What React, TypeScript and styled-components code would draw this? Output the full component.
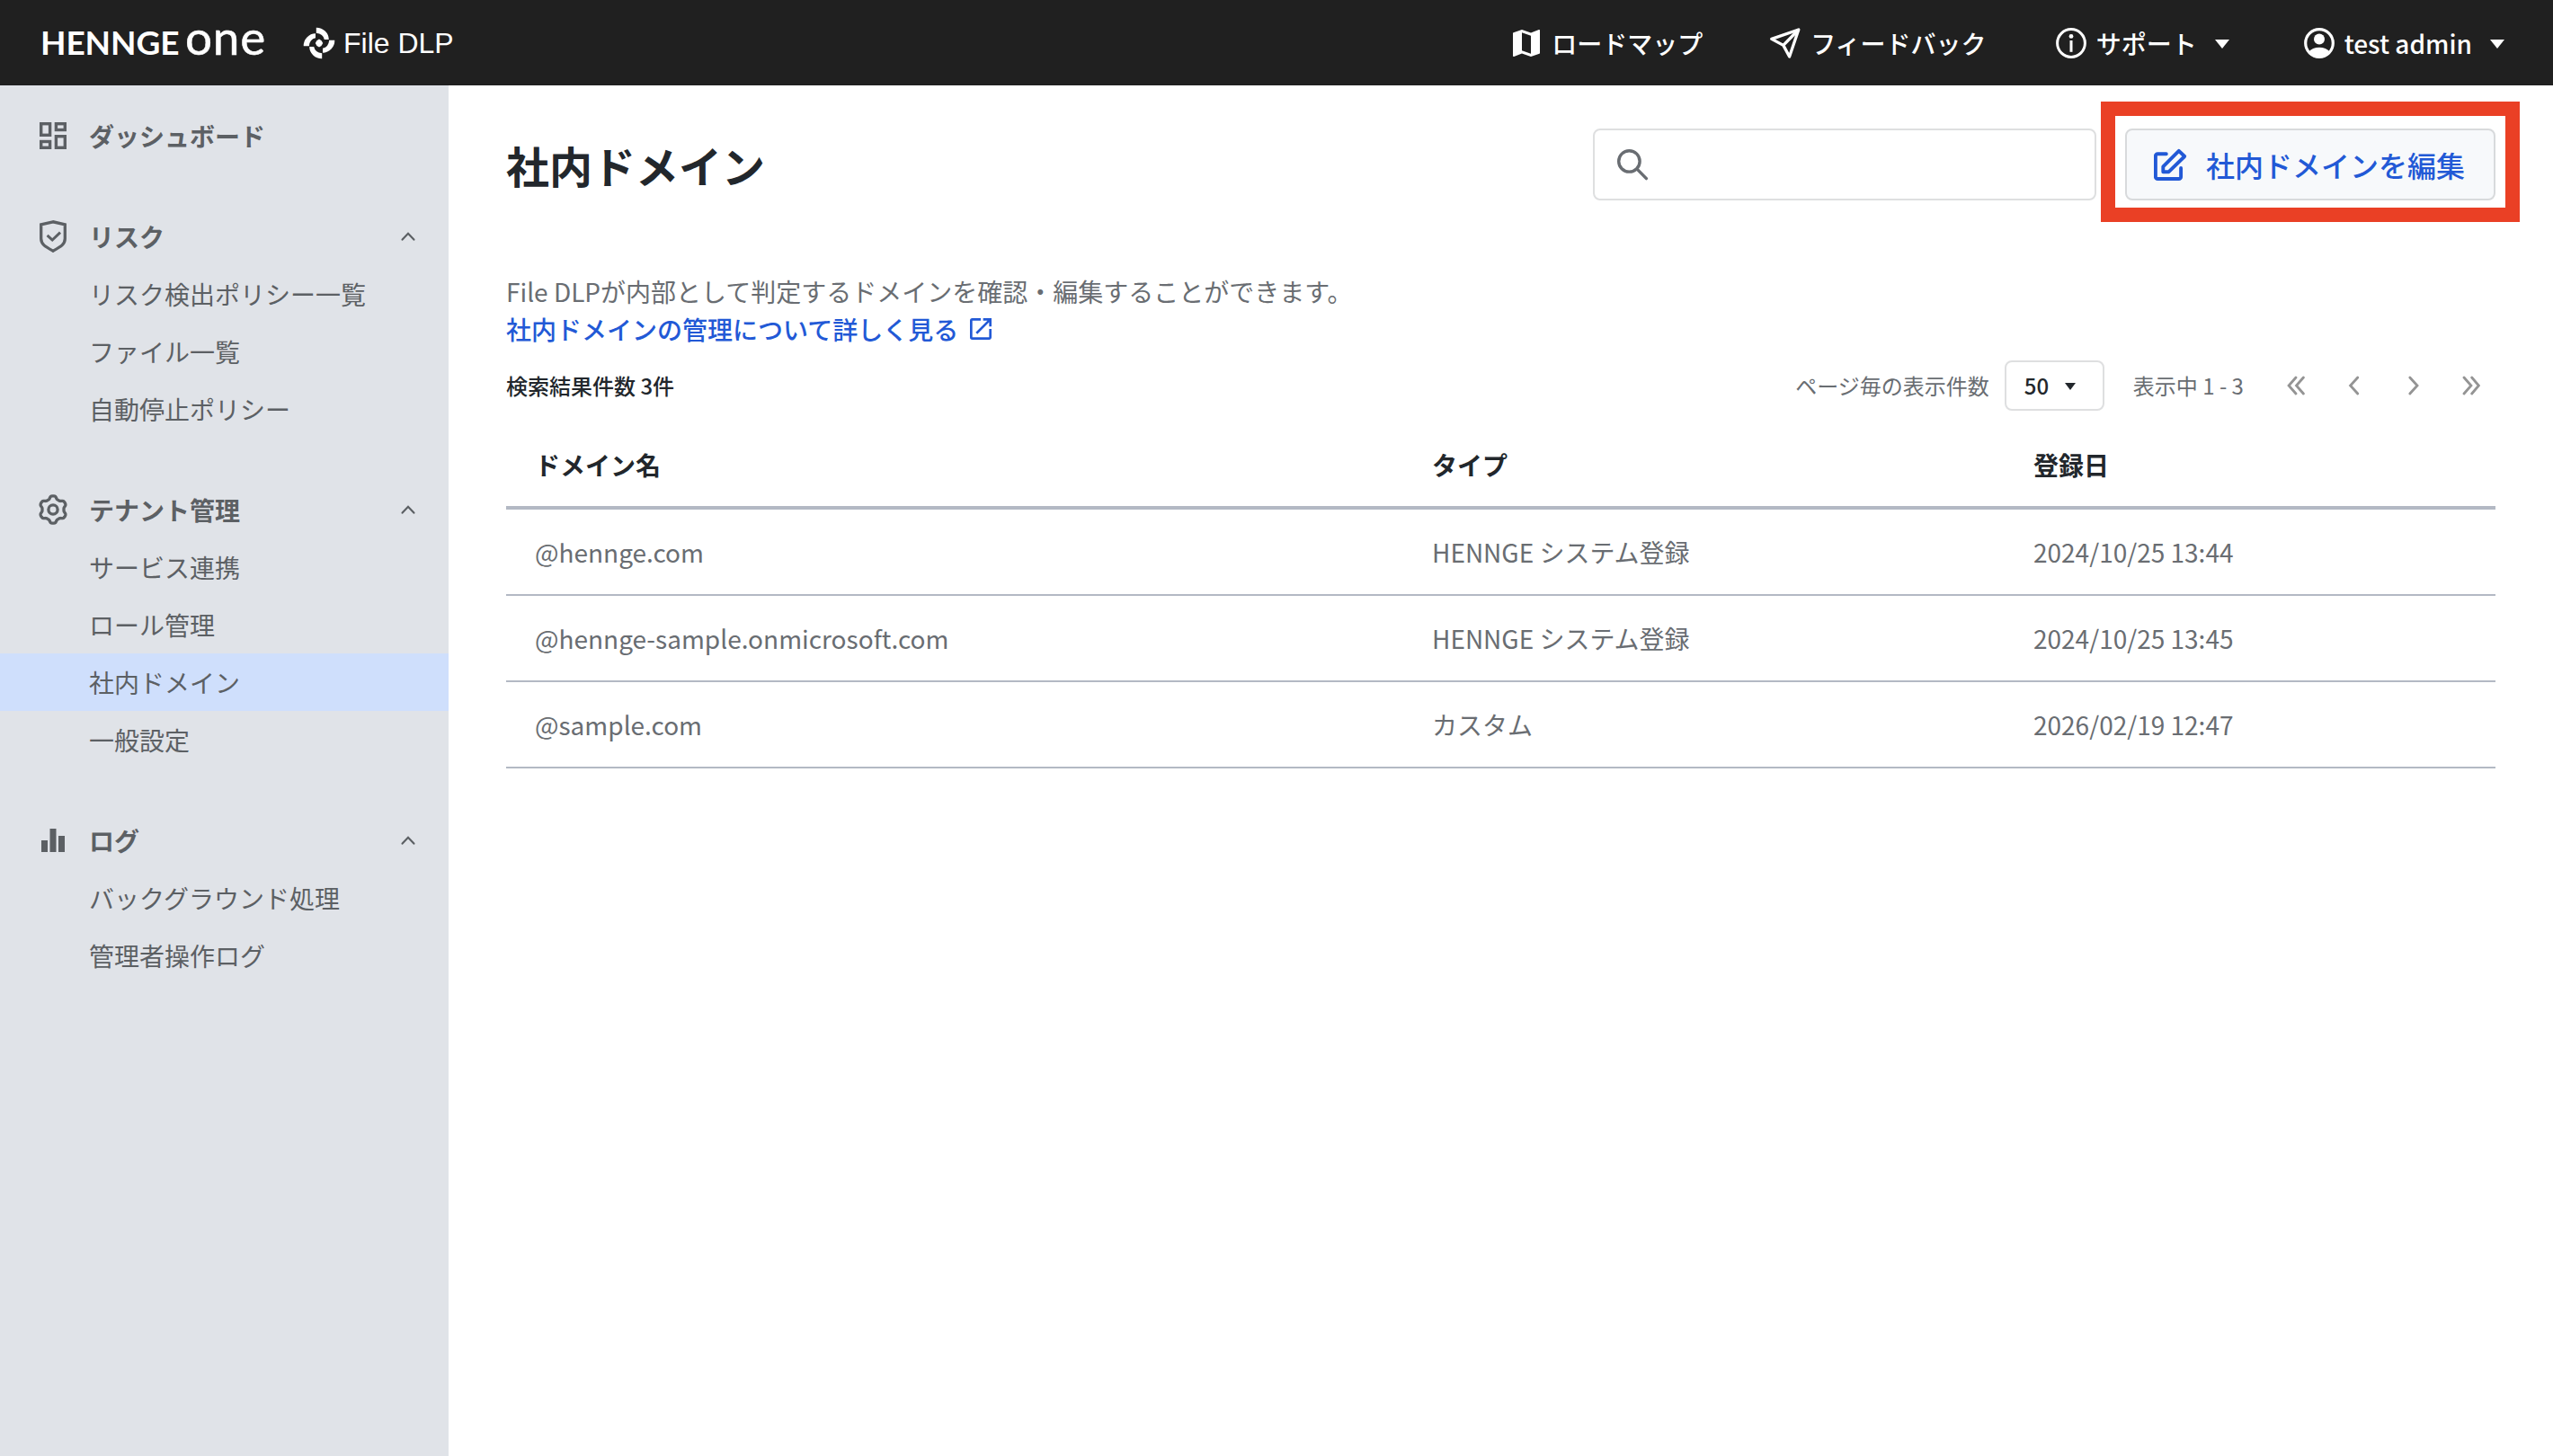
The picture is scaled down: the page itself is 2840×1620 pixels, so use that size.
import React from 'react';
import styled, { createGlobalStyle } from 'styled-components';
import { MdMap, MdOpenInNew } from 'react-icons/md';

const color = {
  header: '#202020',
  sidebar: '#e0e3e8',
  active: '#cfdffc',
  nav: '#5c6064',
  text: '#696d72',
  dark: '#22272c',
  blue: '#2259d6',
  line: '#b3b9c4',
  border: '#dedfe0',
  red: '#ea4025',
};

const GlobalStyle = createGlobalStyle`
  *, *::before, *::after { box-sizing: border-box; }
  html, body { margin: 0; background: #fff; }
  body {
    font-family: "Noto Sans CJK JP", "Noto Sans", sans-serif;
    font-size: 28px;
    line-height: 42px;
    color: ${color.text};
  }
  svg { display: block; flex: none; }
`;

const Page = styled.div`
  display: flex;
  flex-direction: column;
  width: 2840px;
  height: 1620px;
  overflow: hidden;
`;

/* ---------- header ---------- */

const Header = styled.header`
  display: flex;
  align-items: center;
  justify-content: space-between;
  height: 95px;
  flex: none;
  padding: 0 54px 0 45px;
  background: ${color.header};
  color: #fff;
  font-weight: 500;
`;

const Brand = styled.div`
  display: flex;
  align-items: center;
`;

const Wordmark = styled.div`
  display: flex;
  align-items: baseline;
  width: 292px;
  height: 95px;
  line-height: 81px;
  font-family: Lato, "Open Sans", sans-serif;
  white-space: nowrap;
`;

const WordmarkName = styled.span`
  width: 161px;
  font-size: 37px;
  font-weight: 700;
  letter-spacing: -0.1px;
`;

const WordmarkOne = styled.span`
  font-size: 53px;
  font-weight: 400;
  letter-spacing: 0.8px;
  -webkit-text-stroke: 0.5px #fff;
`;

const Product = styled.div`
  display: flex;
  align-items: center;
  gap: 9px;
  font-family: "Liberation Sans", Arial, sans-serif;
  font-size: 32px;
  font-weight: 400;
`;

const HeaderNav = styled.nav`
  display: flex;
  align-items: center;
`;

const HeaderItem = styled.a<{ $gap: number; $after?: number }>`
  display: flex;
  align-items: center;
  gap: ${(p) => p.$gap}px;
  margin-right: ${(p) => p.$after ?? 0}px;
  white-space: nowrap;
`;

const Caret = styled.span<{ $w: number; $h: number; $left: number }>`
  width: 0;
  height: 0;
  margin-left: ${(p) => p.$left}px;
  margin-top: 2px;
  border-left: ${(p) => p.$w / 2}px solid transparent;
  border-right: ${(p) => p.$w / 2}px solid transparent;
  border-top: ${(p) => p.$h}px solid currentColor;
`;

/* ---------- sidebar ---------- */

const Body = styled.div`
  display: flex;
  flex: 1;
  min-height: 0;
`;

const Sidebar = styled.aside`
  display: flex;
  flex-direction: column;
  gap: 48px;
  width: 499px;
  flex: none;
  padding-top: 24px;
  background: ${color.sidebar};
  color: ${color.nav};
`;

const Group = styled.section`
  display: flex;
  flex-direction: column;
`;

const GroupHead = styled.div`
  display: flex;
  align-items: center;
  height: 64px;
  padding: 0 37px 0 39px;
  font-weight: 700;
`;

const GroupIcon = styled.span`
  display: flex;
  align-items: center;
  justify-content: center;
  width: 40px;
  height: 40px;
  margin-right: 20px;
`;

const GroupTitle = styled.span`
  flex: 1;
`;

const NavItem = styled.a<{ $active?: boolean }>`
  height: 64px;
  padding-left: 99px;
  line-height: 64px;
  background: ${(p) => (p.$active ? color.active : 'transparent')};
`;

/* ---------- main ---------- */

const Main = styled.main`
  flex: 1;
  padding: 48px 64px 0;
`;

const TitleRow = styled.div`
  display: flex;
  align-items: center;
  height: 80px;
`;

const Title = styled.h1`
  flex: 1;
  margin: 0;
  font-size: 48px;
  line-height: 72px;
  font-weight: 700;
  color: ${color.dark};
`;

const SearchBox = styled.div`
  display: flex;
  align-items: center;
  width: 560px;
  height: 80px;
  padding-left: 25px;
  border: 2px solid ${color.border};
  border-radius: 8px;
`;

const ButtonFrame = styled.div`
  position: relative;
  margin-left: 32px;
`;

const Highlight = styled.div`
  position: absolute;
  inset: -30px -27px -24px -27px;
  border: 16px solid ${color.red};
  pointer-events: none;
`;

const EditButton = styled.button`
  display: flex;
  align-items: center;
  gap: 21px;
  width: 412px;
  height: 80px;
  padding: 0 0 0 30px;
  border: 2px solid #d8dadc;
  border-radius: 8px;
  background: #f7f9fb;
  color: ${color.blue};
  font: inherit;
  font-size: 32px;
  font-weight: 500;
  white-space: nowrap;
`;

const Description = styled.p`
  margin: 80px 0 0;
`;

const DocLink = styled.a`
  display: flex;
  align-items: center;
  gap: 9px;
  height: 42px;
  color: ${color.blue};
  font-weight: 500;
`;

const Toolbar = styled.div`
  display: flex;
  align-items: center;
  height: 56px;
  margin-top: 14px;
  font-size: 24px;
`;

const ResultCount = styled.span`
  flex: 1;
  font-weight: 500;
  color: ${color.dark};
`;

const PageSize = styled.div`
  display: flex;
  align-items: center;
  width: 111px;
  height: 56px;
  margin: 0 32px 0 17px;
  padding-left: 20px;
  border: 2px solid ${color.border};
  border-radius: 8px;
  color: ${color.dark};
  font-weight: 500;
`;

const Range = styled.span`
  width: 149px;
`;

const Pager = styled.div`
  display: grid;
  grid-template-columns: repeat(4, 64.8px);
  justify-items: center;
  margin-right: -5px;
`;

const Table = styled.div`
  margin-top: 14px;
`;

const Row = styled.div<{ $head?: boolean }>`
  display: grid;
  grid-template-columns: 998px 669px 1fr;
  align-items: center;
  height: 96px;
  border-bottom: ${(p) => (p.$head ? 4 : 2)}px solid ${color.line};
  font-weight: ${(p) => (p.$head ? 700 : 400)};
  color: ${(p) => (p.$head ? color.dark : color.text)};
`;

const Cell = styled.div`
  padding-left: 32px;
`;

/* ---------- icons ---------- */

const DlpLogo = () => (
  <svg width="36" height="36" viewBox="-18 -18 36 36" fill="#fff">
    {[0, 90, 180, 270].map((a) => (
      <path
        key={a}
        transform={`rotate(${a})`}
        d="M-17.3 3.2A13.5 13.8 0 0 1 -4 -10.8V-5.8Q-10.5 -4.5 -11.2 3.2Z"
      />
    ))}
    <path d="M0 -4.4Q3.2 -3.2 4.2 0Q3.2 3.2 0 4.4Q-3.2 3.2 -4.2 0Q-3.2 -3.2 0 -4.4Z" />
  </svg>
);

const SendIcon = () => (
  <svg width="34" height="34" viewBox="0 0 34 34" fill="none" stroke="#fff" strokeWidth="3.3" strokeLinejoin="round">
    <path d="M1.8 12.4L31.8 2L21.6 32L14.8 19.4Z" />
    <path d="M14.8 19.4L31.8 2" />
  </svg>
);

const InfoIcon = () => (
  <svg width="34" height="34" viewBox="0 0 34 34" fill="none">
    <circle cx="17" cy="17" r="15.4" stroke="#fff" strokeWidth="3" />
    <circle cx="17" cy="9.4" r="2.4" fill="#fff" />
    <path d="M17 14V26.8" stroke="#fff" strokeWidth="3" />
  </svg>
);

const AccountIcon = () => (
  <svg width="34" height="34" viewBox="0 0 34 34" fill="#fff">
    <circle cx="17" cy="17" r="15.3" fill="none" stroke="#fff" strokeWidth="3.2" />
    <circle cx="17" cy="12.6" r="6" />
    <path d="M4.6 27.2C8 23.6 12 21.8 17 21.8C22 21.8 26 23.6 29.4 27.2A16 16 0 0 1 4.6 27.2Z" />
  </svg>
);

const DashboardIcon = () => (
  <svg width="30" height="30" viewBox="0 0 30 30" fill="none" stroke="currentColor" strokeWidth="3.4">
    <rect x="1.7" y="1.7" width="9.9" height="12.6" />
    <rect x="18.4" y="1.7" width="9.9" height="6.8" />
    <rect x="1.7" y="21.5" width="9.9" height="6.8" />
    <rect x="18.4" y="15.7" width="9.9" height="12.6" />
  </svg>
);

const ShieldIcon = () => (
  <svg width="30" height="36" viewBox="0 0 30 36" fill="none" stroke="currentColor">
    <path d="M15 1.8L1.7 4.9V20.5C1.7 27 6.5 29.5 15 34.2C23.5 29.5 28.3 27 28.3 20.5V4.9Z" strokeWidth="3.3" />
    <path d="M8.6 16.8L14.2 22L23 13.6" strokeWidth="3" />
  </svg>
);

const gearPath = (() => {
  const points: string[] = [];
  for (let i = 0; i < 180; i += 1) {
    const t = (i / 180) * Math.PI * 2;
    const r = 13.6 + (1.6 * Math.tanh(1.6 * Math.cos(6 * t))) / Math.tanh(1.6);
    points.push(`${(r * Math.sin(t)).toFixed(2)} ${(-r * Math.cos(t)).toFixed(2)}`);
  }
  return `M${points.join('L')}Z`;
})();

const GearIcon = () => (
  <svg width="36" height="36" viewBox="-18 -18 36 36" fill="none" stroke="currentColor" strokeWidth="3.3" strokeLinejoin="round">
    <path d={gearPath} />
    <circle r="5.1" />
  </svg>
);

const BarsIcon = () => (
  <svg width="26" height="26" viewBox="0 0 26 26" fill="currentColor">
    <rect x="0" y="13" width="7" height="13" />
    <rect x="9.5" y="0" width="7" height="26" />
    <rect x="19" y="8" width="7" height="18" />
  </svg>
);

const ChevronUp = () => (
  <svg width="16" height="10" viewBox="0 0 16 10" fill="none" stroke="currentColor" strokeWidth="2.2" strokeLinecap="round">
    <path d="M1.6 8.6L8 1.8L14.4 8.6" />
  </svg>
);

const SearchIcon = () => (
  <svg width="35" height="35" viewBox="0 0 35 35" fill="none" stroke={color.text} strokeLinecap="round">
    <circle cx="13.4" cy="13.4" r="11.7" strokeWidth="3.4" />
    <path d="M22.6 22.6L32.4 32.6" strokeWidth="3.4" />
  </svg>
);

const EditIcon = () => (
  <svg width="37" height="37" viewBox="0 0 37 37" fill="none" stroke={color.blue} strokeWidth="3.9" strokeLinejoin="round" strokeLinecap="round">
    <path d="M13.8 6.2H4.2A2.3 2.3 0 0 0 1.9 8.5V31.7A2.3 2.3 0 0 0 4.2 34H27.8A2.3 2.3 0 0 0 30.1 31.7V22" />
    <path d="M10.3 20.3L27.8 2.8L34.2 9L16.6 26.2H10.3Z" />
  </svg>
);

const PagerIcon = ({ d }: { d: string }) => (
  <svg width="20" height="22" viewBox="0 0 20 22" fill="none" stroke="#949494" strokeWidth="2.8" strokeLinecap="round">
    <path d={d} />
  </svg>
);

/* ---------- data ---------- */

type NavGroup = { title: string; icon: React.ReactNode; items: string[] };

const groups: NavGroup[] = [
  { title: 'ダッシュボード', icon: <DashboardIcon />, items: [] },
  {
    title: 'リスク',
    icon: <ShieldIcon />,
    items: ['リスク検出ポリシー一覧', 'ファイル一覧', '自動停止ポリシー'],
  },
  {
    title: 'テナント管理',
    icon: <GearIcon />,
    items: ['サービス連携', 'ロール管理', '社内ドメイン', '一般設定'],
  },
  { title: 'ログ', icon: <BarsIcon />, items: ['バックグラウンド処理', '管理者操作ログ'] },
];

const rows = [
  ['@hennge.com', 'HENNGE システム登録', '2024/10/25 13:44'],
  ['@hennge-sample.onmicrosoft.com', 'HENNGE システム登録', '2024/10/25 13:45'],
  ['@sample.com', 'カスタム', '2026/02/19 12:47'],
];

export default function App() {
  return (
    <Page lang="ja">
      <GlobalStyle />
      <Header>
        <Brand>
          <Wordmark>
            <WordmarkName>HENNGE</WordmarkName>
            <WordmarkOne>one</WordmarkOne>
          </Wordmark>
          <Product>
            <DlpLogo />
            File DLP
          </Product>
        </Brand>
        <HeaderNav>
          <HeaderItem $gap={8} $after={75}>
            <MdMap size={40} />
            ロードマップ
          </HeaderItem>
          <HeaderItem $gap={11} $after={77}>
            <SendIcon />
            フィードバック
          </HeaderItem>
          <HeaderItem $gap={11} $after={83}>
            <InfoIcon />
            <span>サポート</span>
            <Caret $w={16} $h={10} $left={9} />
          </HeaderItem>
          <HeaderItem $gap={11}>
            <AccountIcon />
            <span>test admin</span>
            <Caret $w={16} $h={10} $left={9} />
          </HeaderItem>
        </HeaderNav>
      </Header>
      <Body>
        <Sidebar>
          {groups.map((g) => (
            <Group key={g.title}>
              <GroupHead>
                <GroupIcon>{g.icon}</GroupIcon>
                <GroupTitle>{g.title}</GroupTitle>
                {g.items.length > 0 && <ChevronUp />}
              </GroupHead>
              {g.items.map((item) => (
                <NavItem key={item} $active={item === '社内ドメイン'}>
                  {item}
                </NavItem>
              ))}
            </Group>
          ))}
        </Sidebar>
        <Main>
          <TitleRow>
            <Title>社内ドメイン</Title>
            <SearchBox>
              <SearchIcon />
            </SearchBox>
            <ButtonFrame>
              <EditButton>
                <EditIcon />
                社内ドメインを編集
              </EditButton>
              <Highlight />
            </ButtonFrame>
          </TitleRow>
          <Description>File DLPが内部として判定するドメインを確認・編集することができます。</Description>
          <DocLink>
            社内ドメインの管理について詳しく見る
            <MdOpenInNew size={32} />
          </DocLink>
          <Toolbar>
            <ResultCount>検索結果件数 3件</ResultCount>
            <span>ページ毎の表示件数</span>
            <PageSize>
              50
              <Caret $w={13} $h={8} $left={18} />
            </PageSize>
            <Range>表示中 1 - 3</Range>
            <Pager>
              <PagerIcon d="M10 2L2.1 11L10 20M18.4 2L10.5 11L18.4 20" />
              <PagerIcon d="M13.8 2L5.6 11L13.8 20" />
              <PagerIcon d="M6.8 2L15 11L6.8 20" />
              <PagerIcon d="M2 2L9.9 11L2 20M10.7 2L18.4 11L10.7 20" />
            </Pager>
          </Toolbar>
          <Table>
            <Row $head>
              <Cell>ドメイン名</Cell>
              <Cell>タイプ</Cell>
              <Cell>登録日</Cell>
            </Row>
            {rows.map((r) => (
              <Row key={r[0]}>
                {r.map((c) => (
                  <Cell key={c}>{c}</Cell>
                ))}
              </Row>
            ))}
          </Table>
        </Main>
      </Body>
    </Page>
  );
}
